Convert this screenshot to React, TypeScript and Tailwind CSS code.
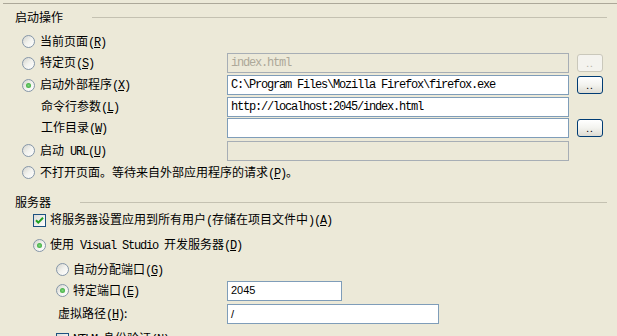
import type { ReactNode } from 'react';

// ASCII runs look like SimSun's half-width glyphs: 6px per char
function A({ children }: { children: ReactNode }) {
  return <span className="font-['Liberation_Mono',monospace] tracking-[-1.2px] whitespace-pre">{children}</span>;
}

function Key({ k }: { k: string }) {
  return (
    <A>
      (<u>{k}</u>)
    </A>
  );
}

function Radio({ checked = false }: { checked?: boolean }) {
  return (
    <span className="flex w-[13px] h-[13px] shrink-0 items-center justify-center rounded-full border border-[#8596A8] bg-linear-to-br from-[#D4D4CD] via-[#F2F2EE] to-white">
      {checked && (
        <span className="w-[5px] h-[5px] rounded-full bg-radial from-[#7DD67D] to-[#219F21]" />
      )}
    </span>
  );
}

function Check({ checked = false }: { checked?: boolean }) {
  return (
    <span className="flex w-[13px] h-[13px] shrink-0 items-center justify-center border border-[#1C5180] bg-linear-to-br from-[#DCDCD7] to-white">
      {checked && (
        <svg width="9" height="9" viewBox="0 0 9 9">
          <path d="M1 4.2 L3.3 6.6 L8 1.8" fill="none" stroke="#21A121" strokeWidth="2" />
        </svg>
      )}
    </span>
  );
}

function Box({ w, value, disabled = false, sans = false }: { w: string; value?: string; disabled?: boolean; sans?: boolean }) {
  return (
    <div
      className={`${w} h-[20px] shrink-0 flex items-center px-[3px] border ${
        disabled ? 'border-[#A7AEB5] bg-[#ECE9D8] text-[#ACA899]' : 'border-[#7F9DB9] bg-white text-black'
      } ${sans ? "font-['Liberation_Sans',sans-serif] text-[11px]" : "font-['Liberation_Mono',monospace] tracking-[-1.2px] text-[12px]"} leading-none overflow-hidden whitespace-nowrap`}
    >
      {value}
    </div>
  );
}

function Browse({ disabled = false }: { disabled?: boolean }) {
  return (
    <div
      className={`ml-[8px] w-[26px] h-[18px] shrink-0 flex items-center justify-center rounded-[3px] border text-[10px] leading-none tracking-[1px] ${
        disabled
          ? 'border-[#CAC8BB] bg-[#F4F3EE] text-[#B5B2A4]'
          : 'border-[#003C74] bg-linear-to-b from-white via-[#F3F3EF] to-[#DEDCD3] text-black'
      }`}
    >
      ..
    </div>
  );
}

function Heading({ label }: { label: string }) {
  return (
    <div className="flex items-center h-[18px] pl-[15px]">
      <span>{label}</span>
      <div className="flex-1 h-px bg-[#C4C1B1] ml-[29px] mr-[10px]" />
    </div>
  );
}

export default function App() {
  return (
    <div className="w-[617px] h-[336px] overflow-hidden bg-[#ECE9D8] text-black text-[12px] leading-[14px] font-['Noto_Sans_CJK_SC','Noto_Sans',sans-serif]">
      <div className="pt-[3px] pl-[3px]">
        <div className="h-px bg-[#ACA899]" />
      </div>

      {/* 启动操作 */}
      <div className="mt-[4px]">
        <Heading label="启动操作" />
      </div>

      <div className="mt-[5px] flex flex-col">
        <div className="h-[21px] flex items-center pl-[22px] gap-[5px]">
          <Radio />
          <span>当前页面<Key k="R" /></span>
        </div>
        <div className="h-[22px] flex items-center">
          <div className="w-[227px] shrink-0 flex items-center pl-[22px] gap-[5px]">
            <Radio />
            <span>特定页<Key k="S" /></span>
          </div>
          <Box w="w-[342px]" value="index.html" disabled />
          <Browse disabled />
        </div>
        <div className="h-[22px] flex items-center">
          <div className="w-[227px] shrink-0 flex items-center pl-[22px] gap-[5px]">
            <Radio checked />
            <span>启动外部程序<Key k="X" /></span>
          </div>
          <Box w="w-[342px]" value="C:\Program Files\Mozilla Firefox\firefox.exe" />
          <Browse />
        </div>
        <div className="h-[21px] flex items-center">
          <div className="w-[227px] shrink-0 pl-[41px]">
            命令行参数<Key k="L" />
          </div>
          <Box w="w-[342px]" value="http://localhost:2045/index.html" />
        </div>
        <div className="h-[22px] flex items-center">
          <div className="w-[227px] shrink-0 pl-[41px]">
            工作目录<Key k="W" />
          </div>
          <Box w="w-[342px]" />
          <Browse />
        </div>
        <div className="h-[23px] flex items-center">
          <div className="w-[227px] shrink-0 flex items-center pl-[22px] gap-[5px]">
            <Radio />
            <span>启动<A> URL</A><Key k="U" /></span>
          </div>
          <Box w="w-[342px]" disabled />
        </div>
        <div className="h-[21px] flex items-center pl-[22px] gap-[5px]">
          <Radio />
          <span>不打开页面。等待来自外部应用程序的请求<Key k="P" />。</span>
        </div>
      </div>

      {/* 服务器 */}
      <div className="mt-[10px]">
        <Heading label="服务器" />
      </div>

      <div className="flex flex-col">
        <div className="h-[18px] flex items-center pl-[33px] gap-[4px]">
          <Check checked />
          <span>将服务器设置应用到所有用户<A>(</A>存储在项目文件中<A>)</A><Key k="A" /></span>
        </div>
        <div className="mt-[5px] h-[22px] flex items-center pl-[33px] gap-[4px]">
          <Radio checked />
          <span>使用<A> Visual Studio </A>开发服务器<Key k="D" /></span>
        </div>
        <div className="mt-[3px] h-[21px] flex items-center pl-[56px] gap-[4px]">
          <Radio />
          <span>自动分配端口<Key k="G" /></span>
        </div>
        <div className="h-[21px] flex items-center">
          <div className="w-[227px] shrink-0 flex items-center pl-[56px] gap-[4px]">
            <Radio checked />
            <span>特定端口<Key k="E" /></span>
          </div>
          <Box w="w-[115px]" value="2045" sans />
        </div>
        <div className="mt-[1px] h-[24px] flex items-center">
          <div className="w-[227px] shrink-0 pl-[58px]">
            虚拟路径<Key k="H" />:
          </div>
          <Box w="w-[212px]" value="/" sans />
        </div>
        <div className="mt-[4px] h-[18px] flex items-center pl-[56px] gap-[4px]">
          <Check />
          <span><A>NTLM </A>身份验证<Key k="N" /></span>
        </div>
      </div>
    </div>
  );
}
